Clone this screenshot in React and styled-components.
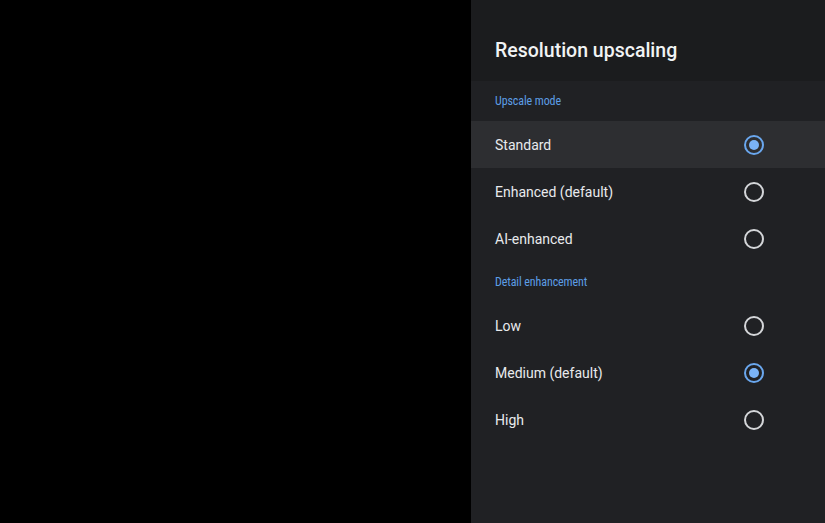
import React from 'react';
import styled, { createGlobalStyle } from 'styled-components';

const sections = [
  {
    title: 'Upscale mode',
    options: [
      { label: 'Standard', checked: true, focused: true },
      { label: 'Enhanced (default)' },
      { label: 'AI-enhanced' },
    ],
  },
  {
    title: 'Detail enhancement',
    options: [
      { label: 'Low' },
      { label: 'Medium (default)', checked: true },
      { label: 'High' },
    ],
  },
];

const GlobalStyle = createGlobalStyle`
  html, body {
    margin: 0;
    padding: 0;
    background: #000;
  }
  body {
    font-family: Roboto, 'Liberation Sans', sans-serif;
  }
`;

const App = () => {
  return (
    <>
      <GlobalStyle />
      <Screen>
        <Backdrop />
        <Panel>
          <Header>
            <Title>Resolution upscaling</Title>
          </Header>
          <Body>
            {sections.map((section) => (
              <Section key={section.title}>
                <SectionTitle>{section.title}</SectionTitle>
                {section.options.map((option) => (
                  <Row key={option.label} $focused={option.focused}>
                    <Label>{option.label}</Label>
                    <Radio $checked={option.checked} />
                  </Row>
                ))}
              </Section>
            ))}
          </Body>
        </Panel>
      </Screen>
    </>
  );
};

const Screen = styled.div`
  width: 825px;
  height: 523px;
  display: flex;
  overflow: hidden;
`;

const Backdrop = styled.div`
  flex: 1;
  background: #000;
`;

const Panel = styled.div`
  width: 354px;
  display: flex;
  flex-direction: column;
  background: #202124;
`;

const Header = styled.div`
  height: 81px;
  box-sizing: border-box;
  padding: 39px 0 0 24px;
  background: #1b1c1e;
`;

const Title = styled.h1`
  margin: 0;
  font-size: 19.5px;
  line-height: 24px;
  font-weight: 500;
  color: #f1f3f4;
`;

const Body = styled.div`
  display: flex;
  flex-direction: column;
`;

const Section = styled.div`
  display: flex;
  flex-direction: column;
`;

const SectionTitle = styled.div`
  height: 40px;
  box-sizing: border-box;
  padding: 13px 24px 0;
  font-family: 'Roboto Condensed', 'DejaVu Sans Condensed', Roboto, sans-serif;
  font-size: 12px;
  line-height: 14px;
  color: #5d9ee6;
  letter-spacing: -0.1px;
`;

const Row = styled.div`
  height: 47px;
  display: flex;
  align-items: center;
  justify-content: space-between;
  padding: 0 61px 0 24px;
  background: ${(p) => (p.$focused ? '#2d2e31' : 'transparent')};
`;

const Label = styled.span`
  font-size: 14px;
  color: #e8eaed;
`;

const Radio = styled.span`
  width: 20px;
  height: 20px;
  box-sizing: border-box;
  border-radius: 50%;
  border: 2px solid ${(p) => (p.$checked ? '#6aa7ee' : '#d4d6d9')};
  display: flex;
  align-items: center;
  justify-content: center;
  &::after {
    content: '';
    width: 10px;
    height: 10px;
    border-radius: 50%;
    background: #7ab3f7;
    display: ${(p) => (p.$checked ? 'block' : 'none')};
  }
`;

export default App;
